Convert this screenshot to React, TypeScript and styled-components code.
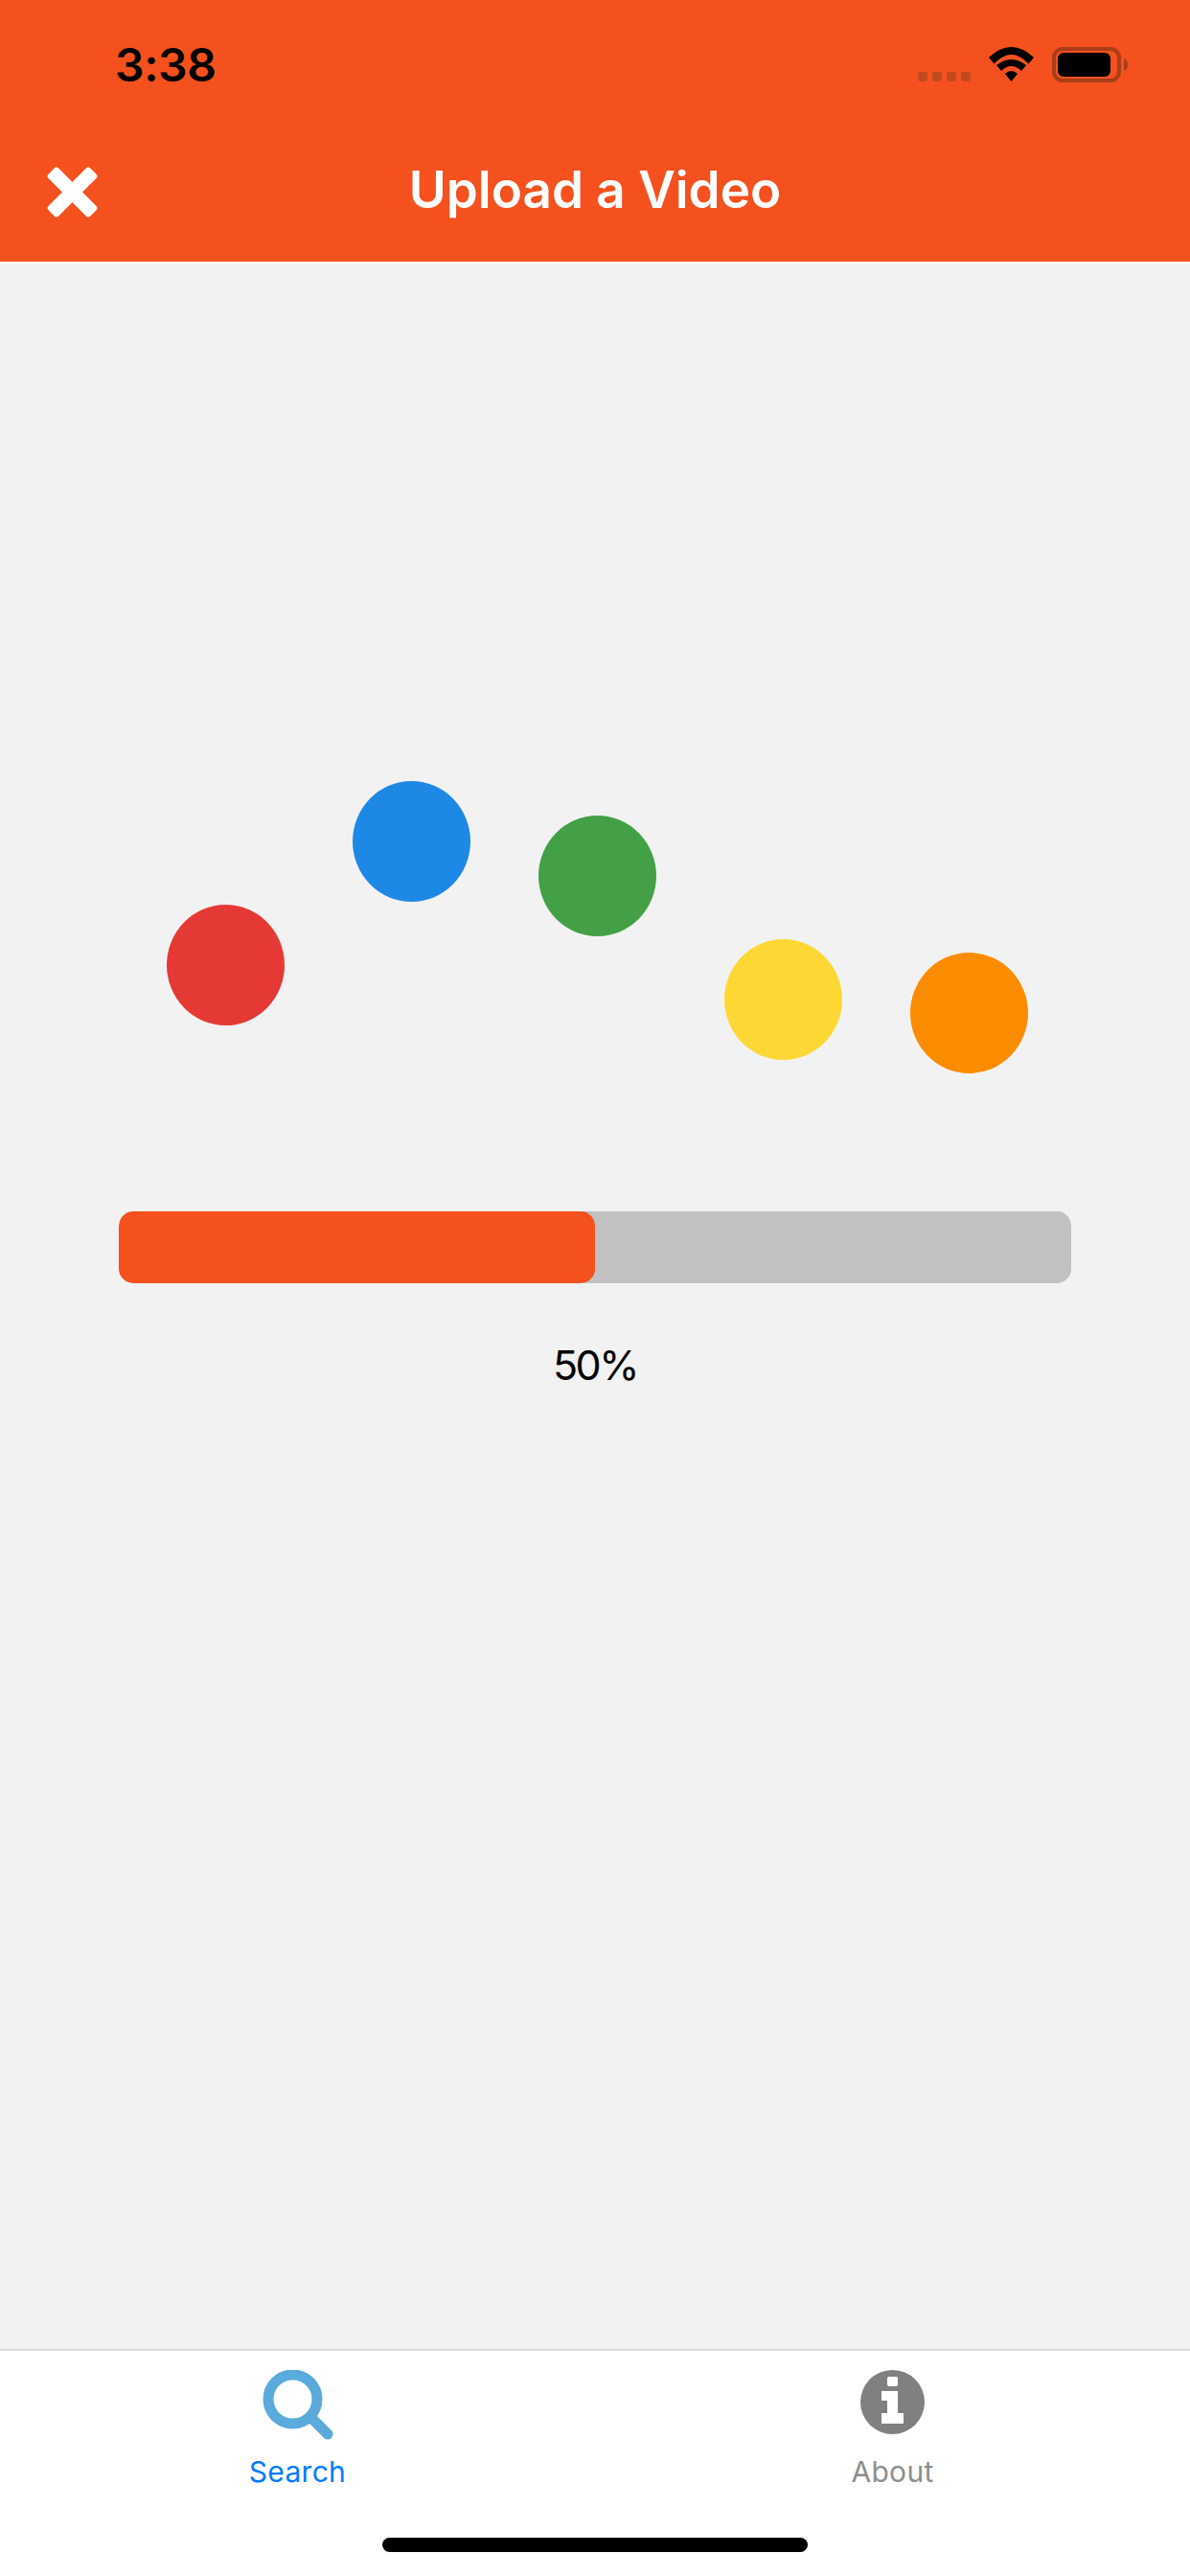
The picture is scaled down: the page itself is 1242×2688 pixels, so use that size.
import React from "react";
import styled, { createGlobalStyle } from "styled-components";

const ORANGE = "#f4511e";

const GlobalStyle = createGlobalStyle`
  html, body {
    margin: 0;
    padding: 0;
    background: #f2f2f2;
  }
  * {
    box-sizing: border-box;
  }
`;

const Screen = styled.div`
  width: 1242px;
  height: 2688px;
  display: flex;
  flex-direction: column;
  background: #f2f2f2;
  font-family: Inter, "Liberation Sans", sans-serif;
  overflow: hidden;
`;

const Top = styled.header`
  height: 273px;
  flex-shrink: 0;
  background: ${ORANGE};
`;

const StatusBar = styled.div`
  height: 130px;
  padding: 40px 64px 0 120px;
  display: flex;
  justify-content: space-between;
  align-items: flex-start;
`;

const Time = styled.span`
  font-size: 48px;
  line-height: 56px;
  font-weight: 600;
  letter-spacing: -0.4px;
  color: #000;
`;

const StatusIcons = styled.div`
  display: flex;
  align-items: flex-start;
  padding-top: 9px;
`;

const Signal = styled.div`
  display: flex;
  gap: 5px;
  margin: 26px 19px 0 0;
`;

const SignalDot = styled.span`
  width: 10px;
  height: 10px;
  border-radius: 3px;
  background: #c04a1e;
`;

const Battery = styled.svg`
  margin-left: 19px;
`;

const NavBar = styled.div`
  height: 143px;
  padding: 0 49px 2px;
  display: flex;
  align-items: center;
`;

const CloseButton = styled.svg`
  flex-shrink: 0;
`;

const Title = styled.h1`
  flex: 1;
  margin: 0 53px 5px 0;
  text-align: center;
  font-size: 53px;
  font-weight: 600;
  color: #fff;
`;

const Main = styled.main`
  flex: 1;
  padding-top: 542px;
  display: flex;
  flex-direction: column;
  align-items: center;
`;

const Dots = styled.div`
  width: 100%;
  height: 305px;
  padding-left: 174px;
  display: flex;
  gap: 71px;
  align-items: flex-start;
`;

const Dot = styled.span<{ $color: string; $drop: number }>`
  width: 123px;
  height: 126px;
  margin-top: ${(p) => p.$drop}px;
  border-radius: 50%;
  background: ${(p) => p.$color};
`;

const Track = styled.div`
  width: 994px;
  height: 75px;
  margin-top: 144px;
  border-radius: 15px;
  background: #c1c1c1;
  overflow: hidden;
`;

const Fill = styled.div`
  height: 100%;
  border-radius: 15px;
  background: ${ORANGE};
`;

const Percent = styled.div`
  margin-top: 59px;
  font-size: 43px;
  line-height: 52px;
  letter-spacing: -2.5px;
  color: #000;
`;

const TabBar = styled.nav`
  height: 237px;
  flex-shrink: 0;
  display: flex;
  flex-direction: column;
  align-items: center;
  background: #fff;
  border-top: 2px solid #d9d9d9;
`;

const Tabs = styled.div`
  width: 100%;
  height: 195px;
  display: flex;
`;

const Tab = styled.div`
  flex: 1;
  padding-top: 20px;
  display: flex;
  flex-direction: column;
  align-items: center;
`;

const TabIcon = styled.div`
  height: 73px;
  display: flex;
  align-items: flex-start;
  justify-content: center;
`;

const TabLabel = styled.span<{ $active?: boolean }>`
  margin-top: 15px;
  font-size: 30px;
  line-height: 36px;
  letter-spacing: 0.3px;
  color: ${(p) => (p.$active ? "#007aff" : "#8e8e8e")};
`;

const HomeIndicator = styled.div`
  width: 444px;
  height: 15px;
  border-radius: 8px;
  background: #000;
`;

const dots = [
  { color: "#e53935", drop: 129 },
  { color: "#1e88e5", drop: 0 },
  { color: "#43a047", drop: 36 },
  { color: "#fdd835", drop: 165 },
  { color: "#fb8c00", drop: 179 },
];

const progress = 50;

const App = () => {
  return (
    <Screen>
      <GlobalStyle />
      <Top>
        <StatusBar>
          <Time>3:38</Time>
          <StatusIcons>
            <Signal>
              <SignalDot />
              <SignalDot />
              <SignalDot />
              <SignalDot />
            </Signal>
            <svg width="47" height="36" viewBox="0 0 47 36">
              <path d="M0 11Q23.5 -11 47 11L41.5 17.5Q23.5 -1.5 5.5 17.5Z" />
              <path d="M8 19Q23.5 7 39 19L34 25Q23.5 15 13 25Z" />
              <path d="M17 28Q23.5 22 30 28L23.5 36Z" />
            </svg>
            <Battery width="80" height="37" viewBox="0 0 80 37">
              <rect x="2" y="2" width="68" height="33" rx="9" fill="none" stroke="#a93e17" strokeWidth="4" />
              <rect x="6" y="6" width="55" height="25" rx="6" fill="#000" />
              <path d="M75 12C78 13 79 15 79 18.500C79 22 78 24 75 25Z" fill="#a93e17" />
            </Battery>
          </StatusIcons>
        </StatusBar>
        <NavBar>
          <CloseButton width="53" height="53" viewBox="0 0 53 53">
            <rect x="-4.500" y="19" width="62" height="15" rx="3.500" fill="#fff" transform="rotate(45 26.500 26.500)" />
            <rect x="-4.500" y="19" width="62" height="15" rx="3.500" fill="#fff" transform="rotate(-45 26.500 26.500)" />
          </CloseButton>
          <Title>Upload a Video</Title>
        </NavBar>
      </Top>
      <Main>
        <Dots>
          {dots.map((d) => (
            <Dot key={d.color} $color={d.color} $drop={d.drop} />
          ))}
        </Dots>
        <Track>
          <Fill style={{ width: `${progress}%` }} />
        </Track>
        <Percent>{progress}%</Percent>
      </Main>
      <TabBar>
        <Tabs>
          <Tab>
            <TabIcon>
              <svg width="74" height="73" viewBox="0 0 74 73">
                <circle cx="31.500" cy="30.500" r="25.500" fill="none" stroke="#5aabdc" strokeWidth="11" />
                <line x1="50" y1="49" x2="68" y2="67" stroke="#5aabdc" strokeWidth="11" strokeLinecap="round" />
              </svg>
            </TabIcon>
            <TabLabel $active>Search</TabLabel>
          </Tab>
          <Tab>
            <TabIcon>
              <svg width="67" height="67" viewBox="0 0 67 67">
                <circle cx="33.500" cy="33.500" r="33.500" fill="#808080" />
                <rect x="28" y="7" width="11" height="10" rx="2" fill="#fff" />
                <path d="M22 22H39V45H45V56H22V45H28V32H22Z" fill="#fff" />
              </svg>
            </TabIcon>
            <TabLabel>About</TabLabel>
          </Tab>
        </Tabs>
        <HomeIndicator />
      </TabBar>
    </Screen>
  );
};

export default App;
